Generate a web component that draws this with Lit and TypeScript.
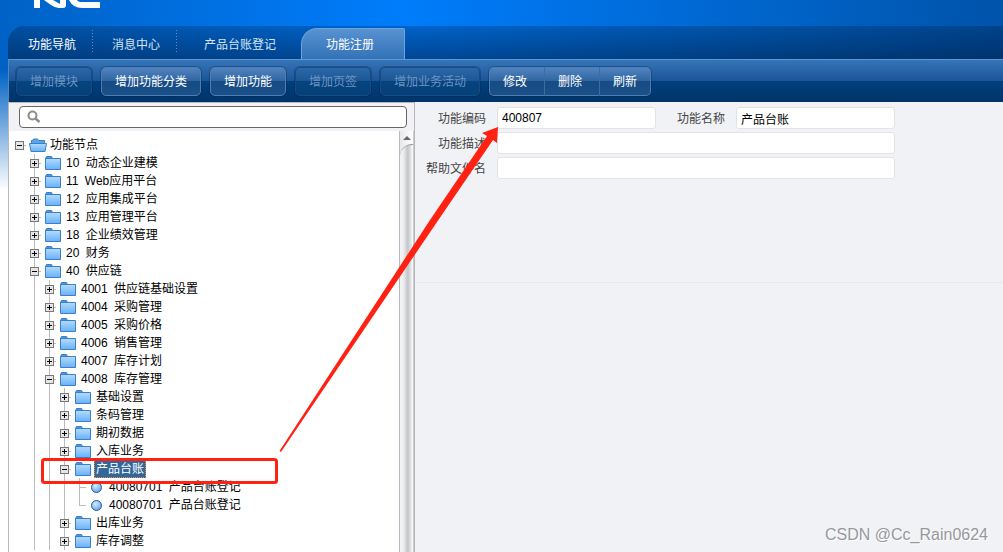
import { LitElement, html, css, svg, nothing } from "lit";
import { customElement, property, state } from "lit/decorators.js";
import { classMap } from "lit/directives/class-map.js";

interface TreeItem {
  code?: string;
  name: string;
  open?: boolean;
  leaf?: boolean;
  selected?: boolean;
  children?: TreeItem[];
}

const folder = (code: string, name: string): TreeItem => ({ code, name });

const TREE: TreeItem = {
  name: "功能节点",
  open: true,
  children: [
    folder("10", "动态企业建模"),
    folder("11", "Web应用平台"),
    folder("12", "应用集成平台"),
    folder("13", "应用管理平台"),
    folder("18", "企业绩效管理"),
    folder("20", "财务"),
    {
      code: "40",
      name: "供应链",
      open: true,
      children: [
        folder("4001", "供应链基础设置"),
        folder("4004", "采购管理"),
        folder("4005", "采购价格"),
        folder("4006", "销售管理"),
        folder("4007", "库存计划"),
        {
          code: "4008",
          name: "库存管理",
          open: true,
          children: [
            { name: "基础设置" },
            { name: "条码管理" },
            { name: "期初数据" },
            { name: "入库业务" },
            {
              name: "产品台账",
              open: true,
              selected: true,
              children: [
                { code: "40080701", name: "产品台账登记", leaf: true },
                { code: "40080701", name: "产品台账登记", leaf: true },
              ],
            },
            { name: "出库业务" },
            { name: "库存调整" },
          ],
        },
      ],
    },
  ],
};

@customElement("tree-node")
class TreeNode extends LitElement {
  static styles = css`
    :host {
      display: block;
    }
    .row {
      display: flex;
      align-items: center;
      height: 18px;
    }
    .toggle {
      flex: none;
      box-sizing: border-box;
      width: 9px;
      height: 9px;
      padding: 0;
      border: 1px solid #777;
      background: #e6e6e6;
      display: grid;
      place-items: center;
    }
    .toggle svg,
    .icon {
      display: block;
      flex: none;
    }
    .stub {
      width: 2px;
      height: 1px;
      background: #bbb;
    }
    .icon {
      margin-left: 3px;
    }
    .label {
      padding: 0 1px;
      margin-left: 2px;
      line-height: 16px;
      white-space: nowrap;
      border: 1px solid transparent;
      color: #000;
    }
    .root {
      margin-left: 1px;
    }
    .code {
      margin-right: 3px;
    }
    .selected {
      background: #336699;
      border: 1px dotted #e0954a;
      color: #fff;
    }
    .children {
      list-style: none;
      margin: 0;
      padding: 0 0 0 15px;
    }
    .child {
      background: linear-gradient(#bbb, #bbb) 4px 0 / 1px 100% no-repeat;
    }
    .child-leaf {
      background:
        linear-gradient(#bbb, #bbb) 4px 0 / 1px 100% no-repeat,
        linear-gradient(#bbb, #bbb) 4px 9px / 7px 1px no-repeat;
    }
    .child-leaf:last-child {
      background-size: 1px 9px, 7px 1px;
    }
    .icon.dot {
      margin-left: 15px;
    }
    .dot + .label {
      margin-left: 4px;
    }
  `;

  @property({ attribute: false }) item!: TreeItem;
  @property({ type: Boolean }) root = false;
  @state() private open = false;

  willUpdate(changed: Map<string, unknown>) {
    if (changed.has("item")) this.open = !!this.item.open;
  }

  private folderIcon() {
    return html`<svg class="icon" width="18" height="16" viewBox="0 0 18 16" aria-hidden="true">
      <defs>
        <linearGradient id="f" x1="0" y1="0" x2="0" y2="1">
          <stop offset="0" stop-color="#b4dcff" />
          <stop offset="1" stop-color="#68b0f8" />
        </linearGradient>
      </defs>
      ${this.root
        ? svg`<path d="M2.5 8V3.5h1l1-1.5h4l1 1.5h6V8" fill="#5ba4ea" stroke="#3a80c8" />
            <path d="M.5 6.5h17l-1.5 8H2z" fill="url(#f)" stroke="#3a80c8" />`
        : svg`<path d="M1.5 3.500l1-2h5l1 2z" fill="#4f96e0" stroke="#3a80c8" />
            <path d="M1.5 3.5h15v11h-15z" fill="url(#f)" stroke="#3a80c8" />`}
    </svg>`;
  }

  render() {
    const { item } = this;
    return html`
      <div class="row">
        ${item.leaf
          ? html`<svg class="dot icon" width="13" height="13" viewBox="0 0 13 13" aria-hidden="true">
              <defs>
                <radialGradient id="d" cx=".4" cy=".35" r=".7">
                  <stop offset="0" stop-color="#d8eeff" />
                  <stop offset="1" stop-color="#5aa0f0" />
                </radialGradient>
              </defs>
              <circle cx="6.5" cy="6.5" r="5" fill="url(#d)" stroke="#2a5a9c" />
            </svg>`
          : html`<button
                class="toggle"
                aria-label=${item.name}
                aria-expanded=${this.open}
                @click=${() => (this.open = !this.open)}
              >
                <svg width="7" height="7" viewBox="0 0 7 7">
                  <path d=${this.open ? "M1 3h5v1H1z" : "M1 3h5v1H1zM3 1h1v5H3z"} fill="#000" />
                </svg>
              </button>
              <span class="stub"></span>
              ${this.folderIcon()}`}
        <span class=${classMap({ label: true, root: this.root, selected: !!item.selected })}
          >${item.code ? html`<span class="code">${item.code}</span> ` : nothing}${item.name}</span
        >
      </div>
      ${this.open && item.children
        ? html`<ul class="children">
            ${item.children.map(
              (c) => html`<li class=${c.leaf ? "child-leaf" : "child"}>
                <tree-node .item=${c}></tree-node>
              </li>`
            )}
          </ul>`
        : nothing}
    `;
  }
}

@customElement("app-root")
class AppRoot extends LitElement {
  static styles = css`
    :host {
      display: flex;
      flex-direction: column;
      position: relative;
      box-sizing: border-box;
      height: 100vh;
      padding-left: 8px;
      overflow: hidden;
      font: 12px/18px "Liberation Sans", "Noto Sans CJK SC", sans-serif;
      background:
        linear-gradient(rgba(255, 255, 255, 0) 70px, #fff 190px),
        radial-gradient(ellipse 640px 600px at 400px 10px, #007dfc, #0062c6 62%, #0050a4);
    }
    .brand {
      height: 26px;
      padding-left: 24px;
    }
    .brand svg {
      display: block;
    }
    .tabs {
      display: flex;
      align-items: flex-end;
      height: 33px;
      padding-left: 1px;
      border-top-left-radius: 16px;
      background: linear-gradient(rgba(0, 10, 30, 0.22), rgba(0, 20, 50, 0.5));
    }
    .tab {
      box-sizing: border-box;
      height: 33px;
      padding: 4px 17px 0 19px;
      border: 0;
      background: none;
      font: inherit;
      color: #d6e4f4;
    }
    .divided {
      background: repeating-linear-gradient(#5f8dc0 0 1px, transparent 1px 3px) right 4px / 1px 23px no-repeat;
    }
    .tab.home {
      color: #fff;
    }
    .tab.wide {
      padding: 4px 25px 0 27px;
    }
    .tab.active {
      height: 31px;
      padding: 1px 30px 0 24px;
      color: #fff;
      border: 1px solid #6ea3dc;
      border-bottom: 0;
      border-radius: 16px 2px 0 0;
      background: linear-gradient(#5792d2, #3472b7);
    }
    .toolbar {
      display: flex;
      align-items: center;
      gap: 9px;
      box-sizing: border-box;
      height: 43px;
      padding-left: 7px;
      border-top: 1px solid #6097d2;
      border-left: 1px solid #4f86c2;
      background: linear-gradient(#3674b9, #1b5596 50%, #00407e 50%, #003468);
    }
    .btn {
      box-sizing: border-box;
      height: 29px;
      padding: 1px 13px 0;
      border: 1px solid #4d7eb3;
      border-radius: 5px;
      color: #fff;
      font: inherit;
      background: linear-gradient(#5083bf, #2f649f 50%, #174b84 50%, #1c5088);
      box-shadow: 0 0 0 1px rgba(0, 30, 70, 0.3);
    }
    .btn:disabled {
      color: #6c94c0;
      border-color: #174b86;
      background: linear-gradient(#2b68aa, #1c5594 50%, #064480 50%, #064078);
    }
    .group {
      display: flex;
      border-radius: 5px;
      box-shadow: 0 0 0 1px rgba(0, 30, 70, 0.3);
    }
    .group .btn {
      padding: 1px 17px 0 13px;
      border-right-width: 0;
      border-left-color: #3c6ca2;
      border-radius: 0;
      box-shadow: none;
    }
    .group .btn:first-child {
      border-left-color: #4d7eb3;
      border-radius: 5px 0 0 5px;
    }
    .group .btn:last-child {
      border-right-width: 1px;
      border-radius: 0 5px 5px 0;
      padding-right: 13px;
    }
    .body {
      flex: 1;
      min-height: 0;
      display: grid;
      grid-template-columns: 407px minmax(0, 1fr);
      background: #f1f2f6;
    }
    .side {
      display: flex;
      flex-direction: column;
      min-height: 0;
      border: 1px solid #b8b8b8;
      border-bottom: 0;
    }
    .search {
      display: flex;
      align-items: center;
      gap: 6px;
      margin: 3px 7px 3px 10px;
      padding: 0 6px;
      height: 20px;
      border: 1px solid #666;
      border-radius: 4px;
      background: #fff;
    }
    .search-input {
      flex: 1;
      min-width: 0;
      border: 0;
      outline: 0;
      padding: 0;
      background: none;
      font: inherit;
    }
    .content {
      flex: 1;
      min-height: 0;
      display: flex;
      background: #fff;
    }
    .tree {
      flex: 1;
      overflow: hidden;
      padding: 5px 0 0 6px;
    }
    .scroll {
      display: flex;
      flex-direction: column;
      width: 13px;
      border-left: 1px solid #b4b8c2;
      border-right: 1px solid #c8cad0;
      background: linear-gradient(90deg, #e8e8ea, #fff);
    }
    .scroll-up {
      height: 13px;
      padding: 0;
      border: 0;
      background: none;
      display: grid;
      place-items: center;
    }
    .thumb {
      flex: 1;
      border-top: 1px solid #999;
      border-top-left-radius: 12px 12px;
      background: linear-gradient(90deg, #f4f4f4, #eee 25%, #c2c5c9 60%, #e4e6e8 85%, #fff);
    }
    .main {
      display: flex;
      flex-direction: column;
      min-width: 0;
    }
    .form {
      display: grid;
      grid-template-columns: 63px 159px 60px 159px;
      column-gap: 10px;
      row-gap: 3px;
      align-content: start;
      height: 172px;
      padding: 5px 0 3px 9px;
      border-bottom: 1px solid #e8eaec;
    }
    .form-label {
      padding-right: 1px;
      text-align: right;
      line-height: 22px;
      padding-top: 1px;
      height: 21px;
      color: #444;
    }
    .field {
      box-sizing: border-box;
      width: 100%;
      height: 22px;
      padding: 0 4px;
      border: 1px solid #e2e3e5;
      border-radius: 3px;
      background: #fff;
      color: #000;
      font: inherit;
    }
    .span {
      grid-column: span 3;
    }
    .overlay {
      position: absolute;
      top: 0;
      left: 0;
      pointer-events: none;
    }
    .watermark {
      position: absolute;
      right: 15px;
      bottom: 8px;
      font-size: 16px;
      color: #96989b;
      text-shadow: 1px 1px 0 #fff;
    }
  `;

  render() {
    return html`
      <header class="brand">
        <svg width="70" height="9" viewBox="0 0 70 9" fill="#fff" role="img" aria-label="NC">
          <path d="M2 0h6v8H2z" />
          <path d="M12 0h9l7 4V0h6v5q0 3-3 3h-4q-4 0-8-3z" />
          <path d="M37 0h8q1 2 5 2h18v6H50q-9 0-13-8z" />
        </svg>
      </header>
      <nav class="tabs">
        <button class="tab divided home">功能导航</button>
        <button class="tab divided">消息中心</button>
        <button class="tab wide">产品台账登记</button>
        <button class="tab active">功能注册</button>
      </nav>
      <div class="toolbar">
        <button class="btn" disabled>增加模块</button>
        <button class="btn">增加功能分类</button>
        <button class="btn">增加功能</button>
        <button class="btn" disabled>增加页签</button>
        <button class="btn" disabled>增加业务活动</button>
        <div class="group">
          <button class="btn">修改</button>
          <button class="btn">删除</button>
          <button class="btn">刷新</button>
        </div>
      </div>
      <div class="body">
        <aside class="side">
          <label class="search">
            <svg width="16" height="16" viewBox="0 0 16 16" fill="none" stroke="#8c8c8c" aria-hidden="true">
              <circle cx="6.5" cy="6.5" r="4" stroke-width="2" />
              <path d="M9.5 9.5l4 3.5" stroke-width="2.5" />
            </svg>
            <input class="search-input" aria-label="search" />
          </label>
          <div class="content">
            <div class="tree"><tree-node root .item=${TREE}></tree-node></div>
            <div class="scroll">
              <button class="scroll-up" aria-label="scroll up">
                <svg width="8" height="4" viewBox="0 0 8 4"><path d="M0 4l4-4 4 4z" fill="#666" /></svg>
              </button>
              <div class="thumb"></div>
            </div>
          </div>
        </aside>
        <main class="main">
          <form class="form">
            <label class="form-label" for="code">功能编码</label>
            <input class="field" id="code" value="400807" />
            <label class="form-label" for="name">功能名称</label>
            <input class="field" id="name" value="产品台账" />
            <label class="form-label" for="desc">功能描述</label>
            <input class="field span" id="desc" />
            <label class="form-label" for="help">帮助文件名</label>
            <input class="field span" id="help" />
          </form>
        </main>
      </div>
      <svg class="overlay" width="1003" height="552" viewBox="0 0 1003 552" aria-hidden="true">
        <rect x="42.5" y="459.5" width="234" height="23" rx="2" fill="none" stroke="#ff2212" stroke-width="3" />
        <path d="M279.5 451L430 220 487 136 482 133 498 127 497 143 493 140 437 222 281 452z" fill="#ff2212" />
      </svg>
      <div class="watermark">CSDN @Cc_Rain0624</div>
    `;
  }
}
